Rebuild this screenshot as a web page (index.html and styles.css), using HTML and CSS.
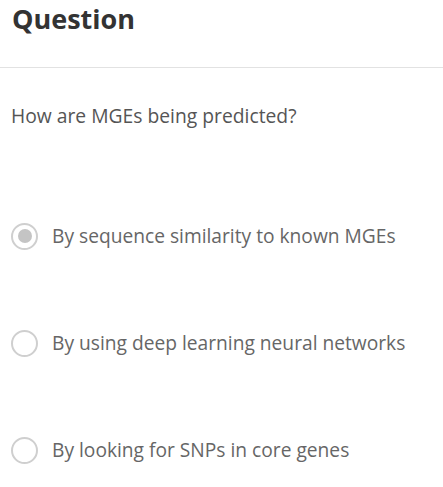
FILE: index.html
```html
<!DOCTYPE html>
<html>
<head>
<meta charset="utf-8">
<link rel="stylesheet" href="styles.css">
</head>
<body>
<div class="card">
  <h2 class="title">Question</h2>
  <div class="body">
    <p class="question">How are MGEs being predicted?</p>
    <ul class="options">
      <li class="option selected"><span class="radio"></span><span class="label">By sequence similarity to known MGEs</span></li>
      <li class="option"><span class="radio"></span><span class="label">By using deep learning neural networks</span></li>
      <li class="option"><span class="radio"></span><span class="label">By looking for SNPs in core genes</span></li>
    </ul>
  </div>
</div>
</body>
</html>
```
FILE: styles.css
```css
html, body {
  margin: 0;
  padding: 0;
  background: #fff;
}
body {
  font-family: "Open Sans", "Noto Sans", sans-serif;
}
.title {
  margin: 0;
  padding: 0 12px;
  height: 68px;
  box-sizing: border-box;
  font-size: 27px;
  font-weight: 700;
  line-height: 38px;
  color: #333;
  border-bottom: 1px solid #e2e2e2;
}
.body {
  padding: 0 11px;
}
.question {
  margin: 0;
  padding-top: 35px;
  font-size: 19.3px;
  line-height: 26px;
  color: #555;
}
.options {
  list-style: none;
  margin: 0;
  padding: 0;
  padding-top: 93px;
  display: flex;
  flex-direction: column;
  gap: 79px;
}
.option {
  display: flex;
  align-items: center;
  gap: 14px;
  height: 28px;
}
.radio {
  width: 27px;
  height: 27px;
  box-sizing: border-box;
  border: 2px solid #cfcfcf;
  border-radius: 50%;
  display: flex;
  align-items: center;
  justify-content: center;
  flex: none;
}
.selected .radio::after {
  content: "";
  width: 14px;
  height: 14px;
  border-radius: 50%;
  background: #c4c4c4;
}
.label {
  font-size: 19.2px;
  color: #666;
  line-height: 28px;
}
```
